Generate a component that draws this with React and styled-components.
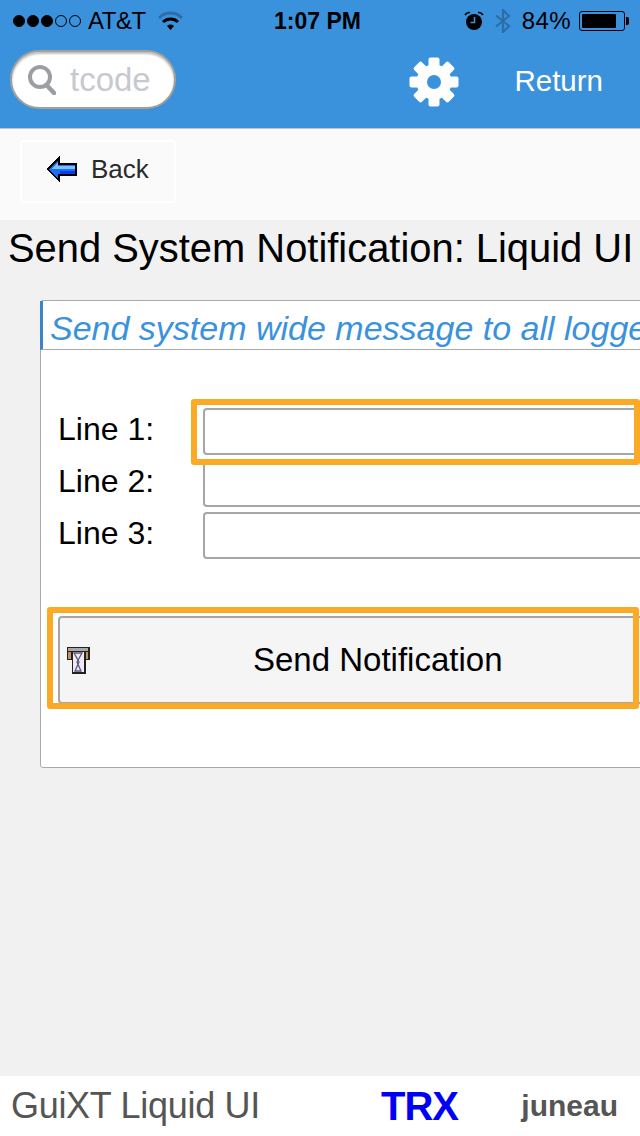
import styled, { createGlobalStyle } from 'styled-components'

const GlobalStyle = createGlobalStyle`
  html, body {
    margin: 0;
    padding: 0;
    background: #f1f1f1;
  }
  * {
    box-sizing: border-box;
  }
`

const Page = styled.div`
  width: 640px;
  height: 1136px;
  overflow: hidden;
  display: flex;
  flex-direction: column;
  background: #f1f1f1;
  font-family: "Liberation Sans", Arial, sans-serif;
  color: #000;
`

const Header = styled.header`
  height: 129px;
  flex: none;
  background: #3a92dd;
  border-bottom: 1px solid #c4c4c4;
`

const StatusBar = styled.div`
  height: 42px;
  margin-bottom: -2px;
  padding: 0 15px 0 13px;
  display: flex;
  align-items: center;
  font-size: 24px;
  position: relative;
`

const Dots = styled.div`
  display: flex;
  gap: 2px;
  margin-right: 7px;
`

const Dot = styled.span`
  width: 12px;
  height: 12px;
  border-radius: 50%;
  border: 1px solid #000;
  background: ${p => (p.$on ? '#000' : 'transparent')};
`

const Carrier = styled.span`
  margin-right: 12px;
  letter-spacing: -0.5px;
`

const Clock = styled.span`
  position: absolute;
  left: 274px;
  top: 8px;
  font-weight: bold;
  font-size: 23px;
`

const StatusRight = styled.div`
  margin-left: auto;
  display: flex;
  align-items: center;
  gap: 11px;
`

const Percent = styled.span`
  margin-right: -3px;
  letter-spacing: 0.4px;
`

const Battery = styled.div`
  width: 46px;
  height: 20px;
  border: 1px solid #000;
  border-radius: 3px;
  padding: 2px;
  position: relative;

  &::before {
    content: '';
    display: block;
    width: 84%;
    height: 100%;
    background: #000;
    border-radius: 1px;
  }

  &::after {
    content: '';
    position: absolute;
    right: -5px;
    top: 5px;
    width: 3px;
    height: 8px;
    background: #000;
    border-radius: 0 2px 2px 0;
  }
`

const Toolbar = styled.div`
  height: 88px;
  display: flex;
  align-items: flex-start;
  padding: 10px 37px 0 10px;
`

const Search = styled.div`
  width: 166px;
  height: 59px;
  background: #fff;
  border-radius: 30px;
  border: 2px solid #a3a09a;
  box-shadow: inset 0 2px 2px rgba(0, 0, 0, 0.25);
  display: flex;
  align-items: center;
  padding: 0 0 0 16px;
  gap: 14px;
  font-size: 33px;
  color: #c8c9cf;
`

const GearButton = styled.div`
  margin: 6px 0 0 232px;
  width: 52px;
  height: 52px;
`

const ReturnLabel = styled.div`
  margin: 14px 0 0 auto;
  color: #fff;
  font-size: 29.5px;
`

const BackBar = styled.div`
  height: 91px;
  flex: none;
  background: #fafafa;
  padding: 11px 20px 0;
`

const BackButton = styled.div`
  width: 156px;
  height: 63px;
  border: 2px solid #fff;
  border-radius: 3px;
  display: flex;
  align-items: center;
  padding: 0 0 5px 24px;
  gap: 14px;
  font-size: 26px;
  color: #2a2a2a;
`

const Title = styled.h1`
  margin: 0;
  padding: 7px 0 0 8px;
  height: 80px;
  flex: none;
  font-size: 39.9px;
  line-height: 42px;
  font-weight: normal;
  white-space: nowrap;
`

const Panel = styled.section`
  margin-left: 40px;
  width: 640px;
  height: 468px;
  flex: none;
  background: #fff;
  border: 1px solid #aaa;
  border-radius: 3px 0 0 3px;
`

const PanelHeader = styled.div`
  height: 49px;
  border-bottom: 1px solid #aaa;
  border-left: 3px solid #3a85c8;
  margin-left: -1px;
  padding: 2px 0 0 7px;
  font-size: 34px;
  line-height: 50px;
  font-style: italic;
  color: #3a92dd;
  white-space: nowrap;
  overflow: hidden;
`

const Fields = styled.div`
  margin-top: 58px;
  display: flex;
  flex-direction: column;
  gap: 5px;
`

const FieldRow = styled.div`
  display: flex;
  align-items: center;
  height: 47px;
  padding-left: 17px;
`

const FieldLabel = styled.label`
  width: 145px;
  flex: none;
  font-size: 32px;
  margin-top: -5px;
`

const InputWrap = styled.div`
  position: relative;
  width: 500px;
  height: 100%;
`

const TextBox = styled.div`
  height: 100%;
  background: #fff;
  border: 2px solid #a6a6a6;
  border-radius: 4px;
`

/* orange callouts painted over the screenshot */
const Highlight = styled.div`
  position: absolute;
  z-index: 1;
  border: 6px solid #fbaa26;
  border-radius: 3px;
  pointer-events: none;
  left: ${p => p.$left}px;
  top: ${p => p.$top}px;
  width: ${p => p.$width}px;
  height: ${p => p.$height}px;
`

const ActionWrap = styled.div`
  position: relative;
  margin: 57px 0 0 17px;
`

const SendButton = styled.div`
  width: 640px;
  height: 88px;
  background: #f5f5f5;
  border: 2px solid #a6a6a6;
  border-radius: 4px;
  display: flex;
  align-items: center;
  padding-left: 6px;
`

const SendLabel = styled.span`
  margin-left: 163px;
  font-size: 33px;
`

const Spacer = styled.div`
  flex: 1;
`

const Footer = styled.footer`
  height: 60px;
  flex: none;
  background: #fff;
  display: flex;
  align-items: center;
  padding: 0 22px 0 11px;
  color: #555;
`

const FooterApp = styled.span`
  font-size: 36px;
  letter-spacing: -0.3px;
`

const FooterTrx = styled.span`
  margin-left: 121px;
  font-size: 40px;
  font-weight: bold;
  color: #0000f5;
  letter-spacing: -1px;
`

const FooterServer = styled.span`
  margin-left: auto;
  font-size: 30px;
  font-weight: bold;
`

function Wifi() {
  return (
    <svg width="25" height="20" viewBox="0 0 25 20">
      <path d="M1 7 A16 16 0 0 1 24 7" fill="none" stroke="#2c6ea8" strokeWidth="3" />
      <path d="M5 11 A11 11 0 0 1 20 11" fill="none" stroke="#000" strokeWidth="3" />
      <path d="M9 15 A5 5 0 0 1 16 15 L12.5 19 Z" fill="#000" />
    </svg>
  )
}

function Alarm() {
  return (
    <svg width="20" height="20" viewBox="0 0 20 20">
      <circle cx="10" cy="11" r="8" fill="#000" />
      <path d="M1 4 Q3 1 6 1.5 M19 4 Q17 1 14 1.5" fill="none" stroke="#000" strokeWidth="1.6" />
      <path d="M10.5 6 V11.5 H6.5" fill="none" stroke="#3a92dd" strokeWidth="1.6" />
    </svg>
  )
}

function Bluetooth() {
  return (
    <svg width="16" height="24" viewBox="0 0 16 24">
      <path d="M1 6.5 L14 17 L8 23 V1 L14 7 L1 17.5" fill="none" stroke="#2c6ea8" strokeWidth="2.2" />
    </svg>
  )
}

function SearchIcon() {
  return (
    <svg width="28" height="30" viewBox="0 0 28 30">
      <circle cx="12" cy="12" r="10" fill="none" stroke="#9b9ea3" strokeWidth="4" />
      <path d="M18.5 20 L26 28" stroke="#9b9ea3" strokeWidth="4.5" strokeLinecap="round" />
    </svg>
  )
}

function Gear() {
  let teeth = [0, 45, 90, 135, 180, 225, 270, 315]
  return (
    <svg width="52" height="52" viewBox="0 0 52 52">
      <circle cx="26" cy="26" r="17.5" fill="#fff" />
      {teeth.map(a => (
        <rect key={a} x="20.5" y="1.5" width="11" height="12" rx="2" fill="#fff" transform={`rotate(${a} 26 26)`} />
      ))}
      <circle cx="26" cy="26" r="7" fill="#3a92dd" />
    </svg>
  )
}

function BackArrow() {
  return (
    <svg width="31" height="26" viewBox="0 0 31 26" shapeRendering="crispEdges">
      <path d="M0 13 L13 0 H14 V7 H31 V20 H14 V26 H13 Z" fill="#000" />
      <path d="M3 13 L12 4 V9 H29 V18 H12 V23 Z" fill="#1f6cf5" />
      <path d="M6 12 L12 6 V10 H29 V13 H6 Z" fill="#7cc0ff" />
      <rect x="14" y="15" width="15" height="3" fill="#0a3df0" />
    </svg>
  )
}

function TransactionIcon() {
  return (
    <svg width="24" height="28" viewBox="0 0 24 28" shapeRendering="crispEdges">
      <rect x="0.5" y="0.5" width="23" height="13.5" fill="#222" />
      <rect x="2" y="2" width="20" height="3" fill="#a8a8a8" />
      <rect x="2" y="6" width="3" height="6.5" fill="#c0935a" />
      <rect x="19" y="6" width="3" height="6.5" fill="#c0935a" />
      <rect x="5.5" y="5" width="14" height="22.5" fill="#222" />
      <rect x="7" y="6" width="11" height="20" fill="#efeaf5" />
      <path d="M8 7 H16 L11 16 L15 25 H9 L13 16 Z" fill="none" stroke="#5a5878" strokeWidth="1.3" shapeRendering="auto" />
    </svg>
  )
}

export default function App() {
  let lines = ['Line 1:', 'Line 2:', 'Line 3:']

  return (
    <Page>
      <GlobalStyle />
      <Header>
        <StatusBar>
          <Dots>
            <Dot $on />
            <Dot $on />
            <Dot $on />
            <Dot />
            <Dot />
          </Dots>
          <Carrier>AT&amp;T</Carrier>
          <Wifi />
          <Clock>1:07 PM</Clock>
          <StatusRight>
            <Alarm />
            <Bluetooth />
            <Percent>84%</Percent>
            <Battery />
          </StatusRight>
        </StatusBar>
        <Toolbar>
          <Search>
            <SearchIcon />
            tcode
          </Search>
          <GearButton>
            <Gear />
          </GearButton>
          <ReturnLabel>Return</ReturnLabel>
        </Toolbar>
      </Header>
      <BackBar>
        <BackButton>
          <BackArrow />
          Back
        </BackButton>
      </BackBar>
      <Title>Send System Notification: Liquid UI</Title>
      <Panel>
        <PanelHeader>Send system wide message to all logged on users</PanelHeader>
        <Fields>
          {lines.map((line, i) => (
            <FieldRow key={line}>
              <FieldLabel>{line}</FieldLabel>
              <InputWrap>
                <TextBox />
                {i === 0 && <Highlight $left={-12} $top={-9} $width={449} $height={66} />}
              </InputWrap>
            </FieldRow>
          ))}
        </Fields>
        <ActionWrap>
          <SendButton>
            <TransactionIcon />
            <SendLabel>Send Notification</SendLabel>
          </SendButton>
          <Highlight $left={-11} $top={-9} $width={592} $height={102} />
        </ActionWrap>
      </Panel>
      <Spacer />
      <Footer>
        <FooterApp>GuiXT Liquid UI</FooterApp>
        <FooterTrx>TRX</FooterTrx>
        <FooterServer>juneau</FooterServer>
      </Footer>
    </Page>
  )
}
